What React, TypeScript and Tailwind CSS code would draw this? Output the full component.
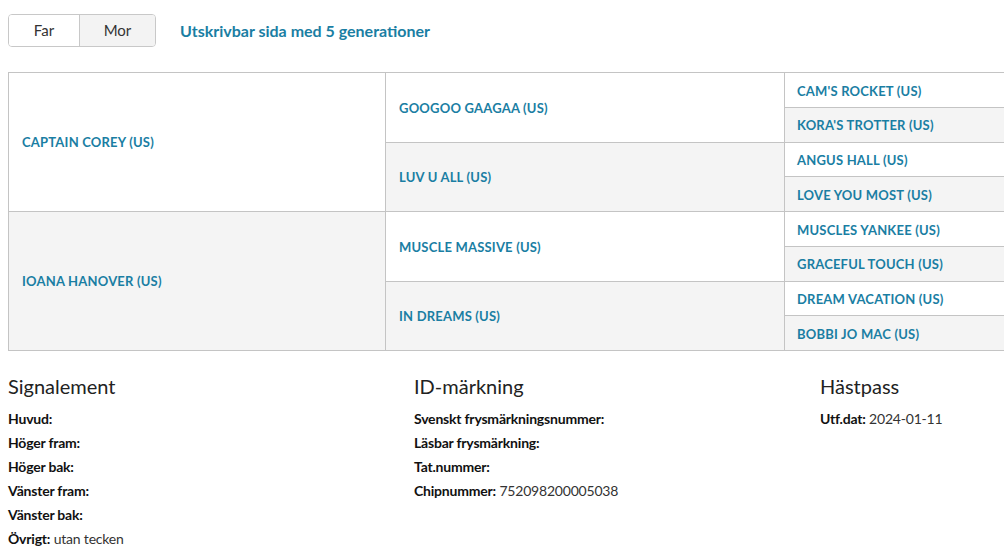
// Pedigree view — stamtavla med signalement och ID-märkning

const font = { fontFamily: "Lato, 'Open Sans', sans-serif" };

type Cell = { name: string; gray: boolean };

const sires: { name: string; gray: boolean; parents: Cell[]; grand: Cell[][] }[] = [
  {
    name: "CAPTAIN COREY (US)",
    gray: false,
    parents: [
      { name: "GOOGOO GAAGAA (US)", gray: false },
      { name: "LUV U ALL (US)", gray: true },
    ],
    grand: [
      [
        { name: "CAM'S ROCKET (US)", gray: false },
        { name: "KORA'S TROTTER (US)", gray: true },
      ],
      [
        { name: "ANGUS HALL (US)", gray: false },
        { name: "LOVE YOU MOST (US)", gray: true },
      ],
    ],
  },
  {
    name: "IOANA HANOVER (US)",
    gray: true,
    parents: [
      { name: "MUSCLE MASSIVE (US)", gray: false },
      { name: "IN DREAMS (US)", gray: true },
    ],
    grand: [
      [
        { name: "MUSCLES YANKEE (US)", gray: false },
        { name: "GRACEFUL TOUCH (US)", gray: true },
      ],
      [
        { name: "DREAM VACATION (US)", gray: false },
        { name: "BOBBI JO MAC (US)", gray: true },
      ],
    ],
  },
];

function Name({ children }: { children: string }) {
  return (
    <a className="text-[13px] font-bold text-[#1a7ea3] tracking-[0.2px]" href="#">
      {children}
    </a>
  );
}

function Info({ label, value }: { label: string; value?: string }) {
  return (
    <div className="text-[14px] leading-[24px] text-[#111] tracking-[-0.2px]">
      <span className="font-bold">{label}</span>
      {value && <span className="text-[#333]"> {value}</span>}
    </div>
  );
}

export default function App() {
  return (
    <div className="w-[1004px] h-[554px] overflow-hidden bg-white" style={font}>
      {/* Toggle + link */}
      <div className="flex items-center pl-2 pt-[14px] h-[47px]">
        <div className="flex h-[33px] rounded border border-[#c8c8c8] overflow-hidden text-[15px] text-[#333]">
          <button className="w-[71px] bg-white border-r border-[#c8c8c8]">Far</button>
          <button className="w-[75px] bg-[#f3f3f3]">Mor</button>
        </div>
        <a href="#" className="ml-[24px] text-[16px] font-bold text-[#1a7ea3]">
          Utskrivbar sida med 5 generationer
        </a>
      </div>

      {/* Pedigree table */}
      <div className="ml-2 mt-[25px] w-[1010px] border border-[#c4c4c4] flex flex-col">
        {sires.map((s, i) => (
          <div
            key={s.name}
            className={`flex ${i > 0 ? "h-[139px] border-t border-[#c4c4c4]" : "h-[138px]"}`}
          >
            <div
              className={`w-[377px] flex items-center pl-[13px] pt-[2px] border-r border-[#c4c4c4] ${
                s.gray ? "bg-[#f4f4f4]" : "bg-white"
              }`}
            >
              <Name>{s.name}</Name>
            </div>
            <div className="w-[399px] flex flex-col border-r border-[#c4c4c4]">
              {s.parents.map((p, j) => (
                <div
                  key={p.name}
                  className={`flex-1 flex items-center pl-[13px] pt-[2px] ${j > 0 ? "border-t border-[#c4c4c4]" : ""} ${
                    p.gray ? "bg-[#f4f4f4]" : "bg-white"
                  }`}
                >
                  <Name>{p.name}</Name>
                </div>
              ))}
            </div>
            <div className="flex-1 flex flex-col">
              {s.grand.flat().map((g, k) => (
                <div
                  key={g.name}
                  className={`flex-1 flex items-center pl-[12px] pt-[3px] ${k > 0 ? "border-t border-[#c4c4c4]" : ""} ${
                    g.gray ? "bg-[#f4f4f4]" : "bg-white"
                  }`}
                >
                  <Name>{g.name}</Name>
                </div>
              ))}
            </div>
          </div>
        ))}
      </div>

      {/* Details */}
      <div className="grid grid-cols-[406px_406px_1fr] pl-2 mt-[22px]">
        <div>
          <h3 className="text-[20px] text-[#222] leading-[26px] mb-[8px]">Signalement</h3>
          <Info label="Huvud:" />
          <Info label="Höger fram:" />
          <Info label="Höger bak:" />
          <Info label="Vänster fram:" />
          <Info label="Vänster bak:" />
          <Info label="Övrigt:" value="utan tecken" />
        </div>
        <div>
          <h3 className="text-[20px] text-[#222] leading-[26px] mb-[8px]">ID-märkning</h3>
          <Info label="Svenskt frysmärkningsnummer:" />
          <Info label="Läsbar frysmärkning:" />
          <Info label="Tat.nummer:" />
          <Info label="Chipnummer:" value="752098200005038" />
        </div>
        <div>
          <h3 className="text-[20px] text-[#222] leading-[26px] mb-[8px]">Hästpass</h3>
          <Info label="Utf.dat:" value="2024-01-11" />
        </div>
      </div>
    </div>
  );
}
